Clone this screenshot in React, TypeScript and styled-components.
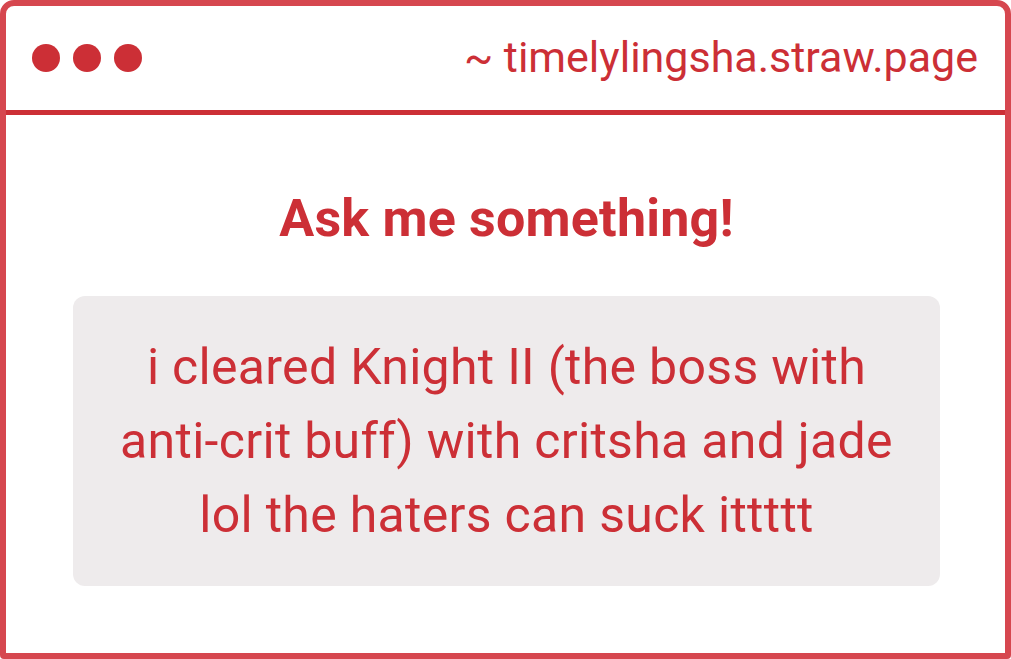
import React from 'react';
import styled, { createGlobalStyle } from 'styled-components';

const GlobalStyle = createGlobalStyle`
  html, body {
    margin: 0;
    padding: 0;
    background: #ffffff;
  }
  body {
    font-family: Roboto, "Liberation Sans", sans-serif;
  }
`;

const red = '#cc2f36';

const Frame = styled.div`
  box-sizing: border-box;
  width: 1011px;
  height: 659px;
  border: 6px solid #d6474f;
  border-radius: 14px 14px 4px 4px;
  background: #ffffff;
  display: flex;
  flex-direction: column;
  overflow: hidden;
`;

const TitleBar = styled.div`
  box-sizing: border-box;
  height: 109px;
  display: flex;
  align-items: center;
  justify-content: space-between;
  padding: 0 27px 0 26px;
  border-bottom: 5px solid ${red};
`;

const Dots = styled.div`
  display: flex;
  gap: 13px;
`;

const Dot = styled.span`
  width: 28px;
  height: 28px;
  border-radius: 50%;
  background: ${red};
`;

const Address = styled.div`
  color: ${red};
  font-size: 43px;
  margin-top: -2px;
`;

const Body = styled.div`
  flex: 1;
  display: flex;
  flex-direction: column;
  align-items: center;
  padding: 74px 65px 0 67px;
`;

const Heading = styled.h1`
  margin: 0;
  color: ${red};
  font-size: 52px;
  font-weight: 700;
  line-height: 60px;
  letter-spacing: 0.2px;
`;

const Card = styled.div`
  box-sizing: border-box;
  margin-top: 47px;
  width: 867px;
  height: 290px;
  border-radius: 12px;
  background: #eeebec;
  display: flex;
  align-items: center;
  justify-content: center;
  text-align: center;
  padding: 0 20px;
`;

const Message = styled.p`
  margin: 0;
  color: ${red};
  font-size: 50px;
  line-height: 74px;
  letter-spacing: 0.3px;
`;

export default function App() {
  return (
    <>
      <GlobalStyle />
      <Frame>
        <TitleBar>
          <Dots>
            <Dot />
            <Dot />
            <Dot />
          </Dots>
          <Address>~ timelylingsha.straw.page</Address>
        </TitleBar>
        <Body>
          <Heading>Ask me something!</Heading>
          <Card>
            <Message>
              i cleared Knight II (the boss with
              <br />
              anti-crit buff) with critsha and jade
              <br />
              lol the haters can suck ittttt
            </Message>
          </Card>
        </Body>
      </Frame>
    </>
  );
}
